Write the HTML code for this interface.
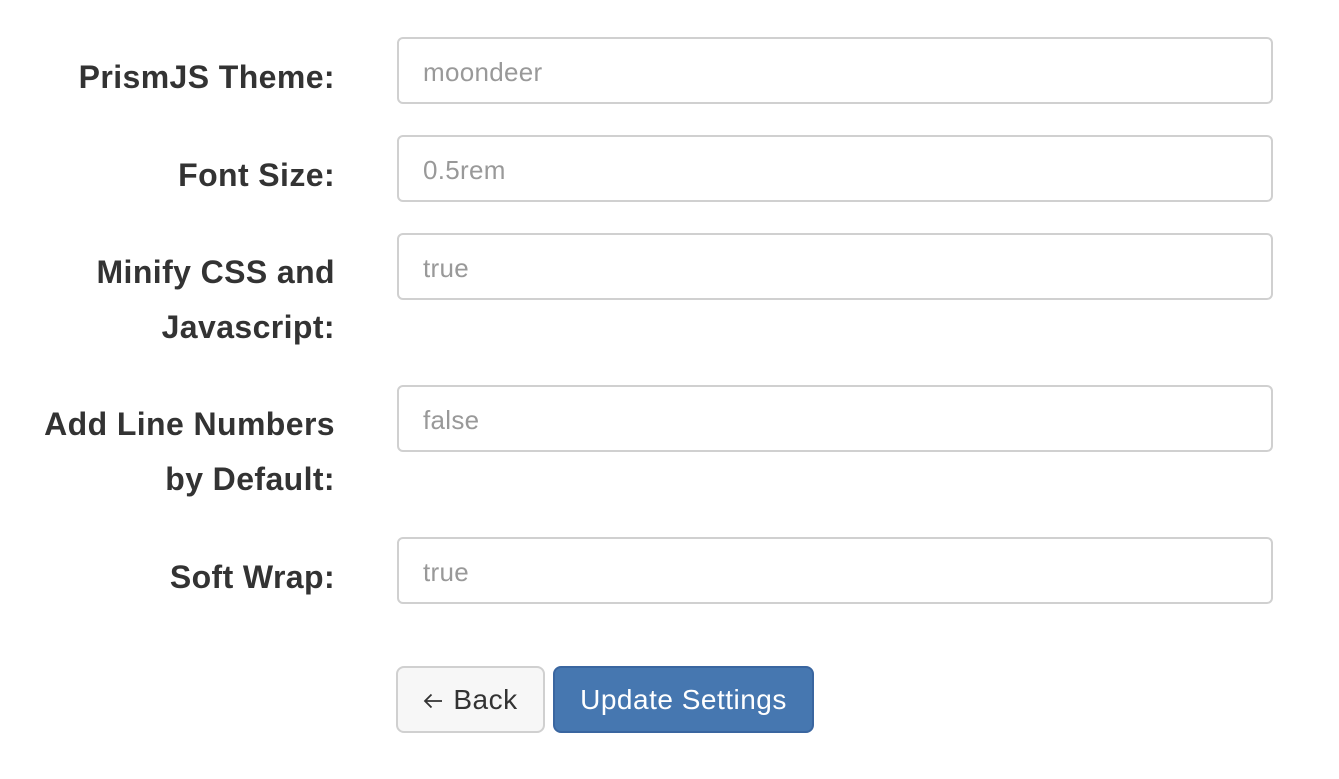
<!DOCTYPE html>
<html><head><style>
body{margin:0;width:1339px;height:779px;background:#fff;font-family:"Liberation Sans",sans-serif;position:relative;overflow:hidden}
.l{position:absolute;right:1004px;text-align:right;font-weight:bold;font-size:32px;letter-spacing:0.4px;color:#333;line-height:55px;width:340px}
.i{position:absolute;left:397px;border:2px solid #d0d0d0;border-radius:6px;font-size:26px;letter-spacing:0.3px;color:#999;line-height:66px;padding-left:24px;box-sizing:border-box;width:876px;height:67px}
.b{position:absolute;top:666px;height:67px;box-sizing:border-box;border-radius:8px;font-size:28px;letter-spacing:0.5px;line-height:63px;text-align:center}
</style></head><body>
<div class="l" style="top:50px">PrismJS Theme:</div>
<div class="i" style="top:37px">moondeer</div>
<div class="l" style="top:148px">Font Size:</div>
<div class="i" style="top:135px">0.5rem</div>
<div class="l" style="top:245px">Minify CSS and<br>Javascript:</div>
<div class="i" style="top:233px">true</div>
<div class="l" style="top:397px">Add Line Numbers<br>by Default:</div>
<div class="i" style="top:385px">false</div>
<div class="l" style="top:550px">Soft Wrap:</div>
<div class="i" style="top:537px">true</div>
<div class="b" style="left:396px;width:149px;background:#f7f7f7;border:2px solid #d0d0d0;color:#333"><svg width="20" height="16" viewBox="0 0 20 16" style="vertical-align:0px;margin-right:10px"><path d="M19 8H2M8.5 1.5L2 8l6.5 6.5" fill="none" stroke="#333" stroke-width="1.8"/></svg>Back</div>
<div class="b" style="left:553px;width:261px;background:#4677b0;border:2px solid #3a66a0;color:#fff">Update Settings</div>
</body></html>
